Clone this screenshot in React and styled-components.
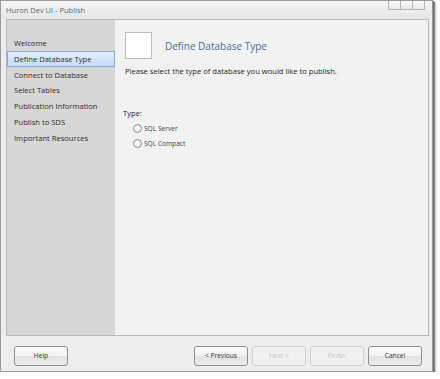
import React from "react";
import styled, { createGlobalStyle } from "styled-components";

const Global = createGlobalStyle`
  html, body { margin: 0; padding: 0; background: #ffffff; }
  body { font-family: "Open Sans", "Noto Sans", sans-serif; }
`;

const Window = styled.div`
  width: 433px;
  height: 372px;
  box-sizing: border-box;
  border: 1px solid #9a9a9a;
  background: #ededed;
  box-shadow: 1px 1px 0 #6a6a6a, 2px 2px 1px #8a8a8a, 3px 3px 2px rgba(0,0,0,0.2);
  display: flex;
  flex-direction: column;
`;

const TitleBar = styled.div`
  height: 18px;
  flex: none;
  display: flex;
  align-items: flex-start;
  justify-content: space-between;
  background: linear-gradient(#f4f4f4, #e6e6e6);
  padding-left: 5px;
`;

const TitleText = styled.span`
  font-size: 7.5px;
  color: #666;
  line-height: 18px;
`;

const Controls = styled.div`
  display: flex;
  margin-right: 7px;
`;

const CtrlBox = styled.div`
  width: 11px;
  height: 8px;
  border: 1px solid #b4b4b4;
  border-top: none;
  background: linear-gradient(#fafafa, #e8e8e8);
  margin-left: -1px;
`;

const Panel = styled.div`
  flex: none;
  height: 317px;
  margin: 0 3px 0 5px;
  border: 1px solid #b9b9b9;
  display: flex;
  box-sizing: border-box;
`;

const Sidebar = styled.div`
  width: 108px;
  flex: none;
  background: #d7d7d7;
  padding-top: 15px;
  display: flex;
  flex-direction: column;
`;

const NavItem = styled.div`
  height: 15.8px;
  box-sizing: border-box;
  line-height: 14px;
  padding-left: 6px;
  font-size: 7.6px;
  color: #2c2c2c;
  white-space: nowrap;
  border: 1px solid ${p => (p.$active ? "#86a9d4" : "transparent")};
  background: ${p => (p.$active ? "linear-gradient(#e4eefb, #c6dbf5)" : "transparent")};
`;

const Content = styled.div`
  flex: 1;
  background: #f2f2f2;
  padding: 12px 0 0 10px;
  display: flex;
  flex-direction: column;
`;

const Header = styled.div`
  display: flex;
  align-items: center;
`;

const IconBox = styled.div`
  width: 27px;
  height: 27px;
  box-sizing: border-box;
  background: #fff;
  border: 1px solid #bdbdbd;
`;

const Heading = styled.div`
  margin-left: 13px;
  font-size: 10px;
  color: #4d6b96;
`;

const Intro = styled.div`
  margin-top: 7px;
  font-size: 7.6px;
  color: #222;
`;

const TypeLabel = styled.div`
  margin-top: 32px;
  margin-left: -2px;
  font-size: 7.6px;
  color: #222;
`;

const Options = styled.div`
  margin-top: 6px;
  margin-left: 8px;
  display: flex;
  flex-direction: column;
  gap: 5.5px;
`;

const Option = styled.label`
  display: flex;
  align-items: center;
  gap: 2px;
  font-size: 6.6px;
  color: #444444;
`;

const Radio = styled.span`
  width: 9px;
  height: 9px;
  box-sizing: border-box;
  border-radius: 50%;
  border: 1px solid #8c8c8c;
  background: radial-gradient(circle at 40% 35%, #ffffff, #e4e4e4);
`;

const Footer = styled.div`
  flex: 1;
  display: flex;
  align-items: center;
  padding: 4px 0 0 13px;
`;

const Button = styled.div`
  width: 54px;
  height: 20px;
  box-sizing: border-box;
  border-radius: 3px;
  border: 1px solid ${p => (p.$disabled ? "#cfcfcf" : "#8e8e8e")};
  background: ${p => (p.$disabled ? "#f1f1f1" : "linear-gradient(#fdfdfd 0%, #f1f1f1 50%, #e2e2e2 51%, #ececec 100%)")};
  color: ${p => (p.$disabled ? "#c2c2c2" : "#333")};
  font-size: 6.6px;
  display: flex;
  align-items: center;
  justify-content: center;
  margin-left: ${p => p.$ml ?? 4}px;
`;

const items = [
  "Welcome",
  "Define Database Type",
  "Connect to Database",
  "Select Tables",
  "Publication Information",
  "Publish to SDS",
  "Important Resources",
];

export default function App() {
  return (
    <>
      <Global />
      <Window>
        <TitleBar>
          <TitleText>Huron Dev UI - Publish</TitleText>
          <Controls>
            <CtrlBox />
            <CtrlBox />
            <CtrlBox />
          </Controls>
        </TitleBar>
        <Panel>
          <Sidebar>
            {items.map((t, i) => (
              <NavItem key={t} $active={i === 1}>{t}</NavItem>
            ))}
          </Sidebar>
          <Content>
            <Header>
              <IconBox />
              <Heading>Define Database Type</Heading>
            </Header>
            <Intro>Please select the type of database you would like to publish.</Intro>
            <TypeLabel>Type:</TypeLabel>
            <Options>
              <Option><Radio />SQL Server</Option>
              <Option><Radio />SQL Compact</Option>
            </Options>
          </Content>
        </Panel>
        <Footer>
          <Button $ml={0}>Help</Button>
          <Button $ml={126}>&lt; Previous</Button>
          <Button $disabled>Next &gt;</Button>
          <Button $disabled>Finish</Button>
          <Button>Cancel</Button>
        </Footer>
      </Window>
    </>
  );
}
